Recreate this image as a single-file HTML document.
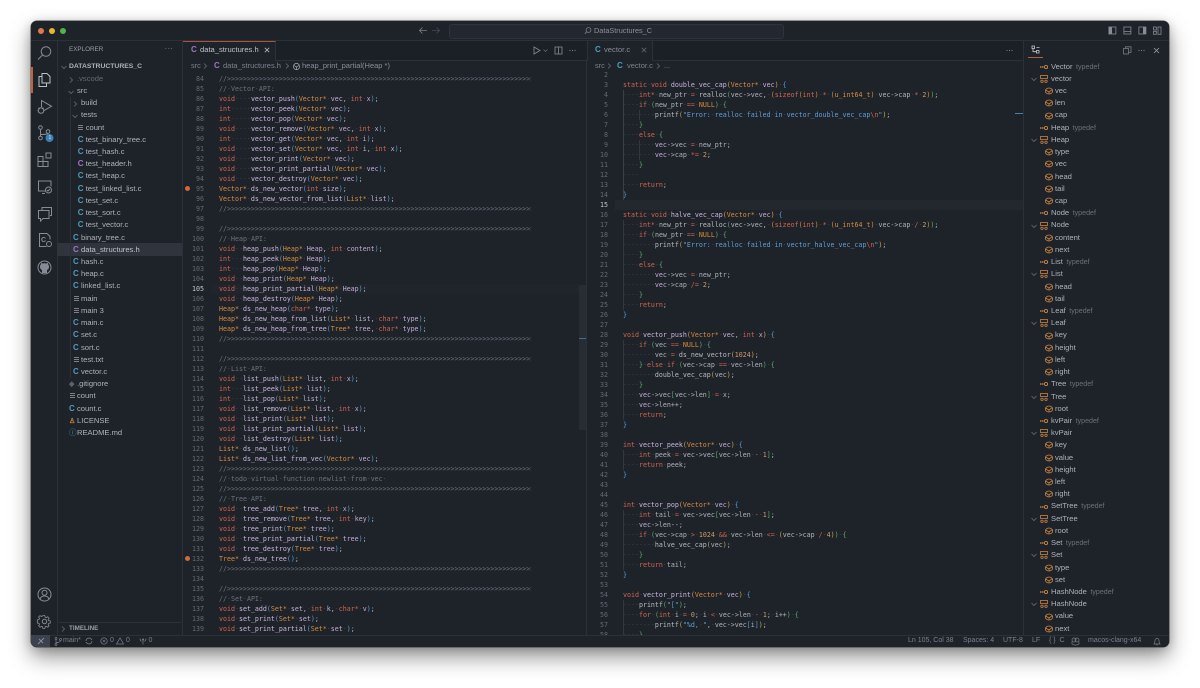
<!DOCTYPE html>
<html><head><meta charset="utf-8"><style>
html,body{margin:0;padding:0;background:#fff;width:1200px;height:688px;overflow:hidden}
body{position:relative;font-family:"Liberation Sans",sans-serif;color:#aeb2ba}
.a{position:absolute}
#win{left:31px;top:21px;width:1138px;height:626px;background:#1e2229;border-radius:6px;box-shadow:0 0 0 .5px #444,0 10px 22px rgba(0,0,0,.42),0 2px 10px rgba(0,0,0,.2)}
.l{background:#2c3038}
pre{position:absolute;margin:0;font:6.645px/10px "DejaVu Sans Mono",monospace;color:#b0b3bc;overflow:hidden}
pre i{font-style:normal;color:#3f4551}
.c{color:#6c727e}.c i{color:#4b515c}
.h{display:inline-block;width:312px;height:10px;overflow:hidden;vertical-align:top;color:#6c727e}
.k{color:#d0654f}.t{color:#d68d40}.f{color:#cbb6df}.v{color:#c4abd7}.b{color:#559ed6}.g{color:#5cab6c}.y{color:#cfa24a}.s{color:#5f9fd6}.n{color:#cf9b6a}.o{color:#d0654f}.p{color:#b8bbc3}
.ln{text-align:right;color:#636974}
.ln b{font-weight:400;color:#c3c6cc}
.t7{font-size:7.3px;line-height:10px;white-space:nowrap}
.r{height:12.22px;line-height:12.22px;font-size:7.6px;white-space:nowrap;position:relative}
.i0{padding-left:69px}.i1{padding-left:77px}.i2{padding-left:81px}.i3{padding-left:85.7px}
.r u{display:inline-block;text-decoration:none;width:8px;margin-left:-8px;font-weight:700;font-size:8px}
.cb{color:#519aba}.cp{color:#a074c4}
.fi{height:5px;width:5px!important;margin-left:-7.5px!important;margin-right:2.5px;background:repeating-linear-gradient(#7b808a 0 1px,transparent 1px 2px)}
.r svg{position:absolute;top:3px}
.o0,.o1,.o2{position:relative;height:12.22px;line-height:12.22px;font-size:7.6px;white-space:nowrap}
.o0,.o1{padding-left:1051px}.o2{padding-left:1055px}
.o0 em,.o1 em{font-style:normal;color:#6a707b;font-size:7.1px;margin-left:3.5px}
.o0 svg,.o1 svg,.o2 svg{position:absolute;top:2.1px;width:8px;height:8px}
.o0 svg,.o1 svg{left:1040px}.o2 svg{left:1044.5px}
.o1 .ch{left:1029.5px}
svg{overflow:visible}
.ic{fill:none;stroke:#868b95;stroke-width:1}
.st{font-size:7px;line-height:12px;color:#7a808b;white-space:nowrap}
</style></head><body>
<svg width="0" height="0" style="position:absolute"><defs>
<symbol id="ch" viewBox="0 0 8 8"><path d="M1.5 3 4 5.5 6.5 3" fill="none" stroke="#666c77" stroke-width=".8"/></symbol>
<symbol id="cr" viewBox="0 0 8 8"><path d="M3 1.5 5.5 4 3 6.5" fill="none" stroke="#666c77" stroke-width=".8"/></symbol>
<symbol id="td" viewBox="0 0 8 8"><rect x="0" y="3.3" width="1.5" height="1.4" fill="#c98442"/><rect x="2" y="3.3" width="1.5" height="1.4" fill="#c98442"/><circle cx="6" cy="4" r="1.6" fill="none" stroke="#c98442" stroke-width=".9"/></symbol>
<symbol id="sr" viewBox="0 0 8 8"><g fill="none" stroke="#c98442" stroke-width=".8"><rect x=".5" y=".5" width="7" height="3"/><circle cx="2" cy="6.3" r="1.2"/><circle cx="6" cy="6.3" r="1.2"/></g></symbol>
<symbol id="fd" viewBox="0 0 8 8"><g fill="none" stroke="#c98442" stroke-width=".8"><ellipse cx="4" cy="4" rx="3.7" ry="3"/><path d="M.6 3 4 5l3.2-2.3M4 5v2"/></g></symbol>
</defs></svg>
<div class="a" id="win"></div>

<!-- titlebar -->
<div class="a" style="left:37.5px;top:28px;width:6px;height:6px;border-radius:50%;background:#dd7a4b"></div>
<div class="a" style="left:48.5px;top:28px;width:6px;height:6px;border-radius:50%;background:#ecb42f"></div>
<div class="a" style="left:59.5px;top:28px;width:6px;height:6px;border-radius:50%;background:#52b24e"></div>
<div class="a l" style="left:31px;top:40px;width:1138px;height:1px"></div>
<svg class="a" style="left:418px;top:26px" width="24" height="9"><path d="M9 4.5H1.5M4.5 1.5l-3 3 3 3" fill="none" stroke="#7c818b" stroke-width=".8"/><path d="M14 4.5h7.5M18.500 1.500l3 3-3 3" fill="none" stroke="#454a54" stroke-width=".8"/></svg>
<div class="a" style="left:449px;top:24px;width:333px;height:12.5px;background:#23272f;border:.7px solid #2f333b;border-radius:3px"></div>
<svg class="a" style="left:584px;top:27px" width="8" height="8"><circle cx="4.5" cy="3" r="2.4" fill="none" stroke="#7c818b" stroke-width=".8"/><path d="M2.7 4.8.8 6.8" stroke="#7c818b" stroke-width=".8"/></svg>
<div class="a t7" style="left:594px;top:25.5px;color:#8c9099">DataStructures_C</div>
<svg class="a" style="left:1108px;top:26px" width="54" height="9"><g fill="none" stroke="#868b95" stroke-width=".8"><rect x=".9" y="1" width="7" height="7"/><rect x="15.9" y="1" width="7" height="7"/><path d="M15.9 5.5h7"/><rect x="30.9" y="1" width="7" height="7"/><rect x="45.5" y="1" width="2.8" height="3"/><rect x="45.5" y="5.5" width="2.8" height="2.8"/><rect x="50" y="1" width="3" height="7.3"/></g><rect x="1" y="1" width="3" height="7" fill="#868b95"/><rect x="35" y="1" width="3" height="7" fill="#868b95"/></svg>

<!-- activity bar -->
<div class="a l" style="left:57px;top:41px;width:1px;height:594px"></div>
<div class="a" style="left:31px;top:67px;width:1.5px;height:26px;background:#c0623f"></div>
<svg class="a" style="left:36px;top:45px" width="17" height="16"><circle cx="10" cy="6.5" r="4.8" class="ic"/><path d="M6.5 10 2 14.5" class="ic"/></svg>
<svg class="a" style="left:37px;top:72px" width="15" height="16"><path d="M5 1.5h5l3 3v6.5H5z" fill="none" stroke="#bcc0c7" stroke-width="1"/><path d="M5 4.5H2v10h7.5V11" fill="none" stroke="#bcc0c7" stroke-width="1"/></svg>
<svg class="a" style="left:37px;top:99px" width="16" height="16"><path d="M4.5 8V1.5l10 5.8-7 4" class="ic"/><circle cx="4" cy="11.5" r="2.8" class="ic"/><path d="M1.5 8.800 3 10M6.500 8.800 5 10M.5 11.500h1M6.500 11.500h1" class="ic"/></svg>
<svg class="a" style="left:37px;top:125px" width="16" height="17"><circle cx="3.5" cy="2.5" r="1.8" class="ic"/><circle cx="3.5" cy="13" r="1.8" class="ic"/><circle cx="11" cy="6.5" r="1.8" class="ic"/><path d="M3.5 4.500V11M4 9.500c4 0 7-.5 7-1.300" class="ic"/><circle cx="12.5" cy="13" r="4" fill="#3d7fb8"/></svg>
<div class="a" style="left:48.500px;top:135px;font-size:5px;color:#d9e6f2;line-height:6px">1</div>
<svg class="a" style="left:37px;top:152px" width="16" height="16"><path d="M1 4.500h5v5h5v5H1zM1 9.500h5v5M6 9.500v5" class="ic"/><rect x="9" y="1" width="5" height="5" class="ic"/></svg>
<svg class="a" style="left:37px;top:179px" width="16" height="16"><path d="M9 12H1.500V2H14v5.500M5 14.500h3" class="ic"/><circle cx="11.5" cy="11" r="3" class="ic"/><path d="M10 11l1 1 2-2" class="ic"/></svg>
<svg class="a" style="left:37px;top:206px" width="16" height="16"><path d="M5 4V1.500h9.500v8H13" class="ic"/><path d="M1.500 4.500H12v8H6l-2.500 2.500v-2.500h-2z" class="ic"/></svg>
<svg class="a" style="left:37px;top:232px" width="16" height="16"><path d="M10 1.500H2.500v13h7M10 1.500l3 3v3" class="ic"/><text x="4" y="10" font-size="7" font-weight="700" fill="#868b95" font-family="Liberation Sans">C</text><circle cx="12" cy="12" r="2.5" class="ic"/></svg>
<svg class="a" style="left:37px;top:259.5px" width="15" height="15"><circle cx="7.5" cy="7.5" r="6.5" class="ic"/><path d="M5 13v-3c-1.500-.8-2-1.600-2-3.500 0-1 .3-1.700 1-2.300l.1-1.500 1.600.8a6 6 0 0 1 3.600 0l1.600-.8.100 1.500c.7.600 1 1.300 1 2.300 0 1.900-.5 2.700-2 3.500v3z" fill="#868b95"/></svg>
<svg class="a" style="left:37px;top:587px" width="15" height="15"><circle cx="7.5" cy="7.5" r="6.5" class="ic"/><circle cx="7.5" cy="5.8" r="2.5" class="ic"/><path d="M3 12c.8-2.200 2.500-3 4.500-3s3.700.8 4.500 3" class="ic"/></svg>
<svg class="a" style="left:37px;top:613.5px" width="15" height="15"><circle cx="7.5" cy="7.5" r="2.2" class="ic"/><path d="M6.300 1h2.400l.4 2 1.400.6 1.700-1.100 1.700 1.700-1.100 1.700.6 1.400 2 .4v2.400l-2 .4-.6 1.400 1.100 1.700-1.700 1.700-1.700-1.100-1.400.6-.4 2H6.300l-.4-2-1.400-.6-1.700 1.100-1.700-1.700 1.100-1.700-.6-1.400-2-.4V6.300l2-.4.600-1.400-1.100-1.700 1.700-1.700 1.700 1.100 1.400-.6z" transform="translate(.7 .7) scale(.82)" class="ic"/></svg>

<!-- sidebar -->
<div class="a l" style="left:182px;top:41px;width:1px;height:594px"></div>
<div class="a" style="left:69px;top:45px;font-size:6.3px;line-height:10px;color:#9a9ea7">EXPLORER</div>
<div class="a" style="left:164.5px;top:43.5px;font-size:8px;line-height:10px;letter-spacing:.3px;color:#7c818b">···</div>
<div class="a" style="left:57px;top:243.3px;width:125px;height:12.3px;background:#30343c"></div>
<div class="a" style="left:69.5px;top:97px;width:.7px;height:281px;background:#2c3038"></div>
<svg class="a" style="left:60px;top:62.5px" width="8" height="8"><use href="#ch"/></svg>
<div class="a" style="left:69px;top:60.5px;font-size:6.8px;font-weight:700;line-height:12px;color:#aeb2ba;white-space:nowrap">DATASTRUCTURES_C</div>
<div class="a" style="left:0;top:72.7px;width:182px;overflow:hidden">
<div class="r i1" style="color:#646a74"><svg style="left:67px" width="8" height="8"><use href="#cr"/></svg>.vscode</div>
<div class="r i1"><svg style="left:67px" width="8" height="8"><use href="#ch"/></svg>src</div>
<div class="r i2"><svg style="left:71px" width="8" height="8"><use href="#cr"/></svg>build</div>
<div class="r i2"><svg style="left:71px" width="8" height="8"><use href="#ch"/></svg>tests</div>
<div class="r i3"><u class="fi"></u>count</div>
<div class="r i3"><u class="cb">C</u>test_binary_tree.c</div>
<div class="r i3"><u class="cb">C</u>test_hash.c</div>
<div class="r i3"><u class="cp">C</u>test_header.h</div>
<div class="r i3"><u class="cb">C</u>test_heap.c</div>
<div class="r i3"><u class="cb">C</u>test_linked_list.c</div>
<div class="r i3"><u class="cb">C</u>test_set.c</div>
<div class="r i3"><u class="cb">C</u>test_sort.c</div>
<div class="r i3"><u class="cb">C</u>test_vector.c</div>
<div class="r i2"><u class="cb">C</u>binary_tree.c</div>
<div class="r i2" style="color:#bfc2c9"><u class="cp">C</u>data_structures.h</div>
<div class="r i2"><u class="cb">C</u>hash.c</div>
<div class="r i2"><u class="cb">C</u>heap.c</div>
<div class="r i2"><u class="cb">C</u>linked_list.c</div>
<div class="r i2"><u class="fi"></u>main</div>
<div class="r i2"><u class="fi"></u>main 3</div>
<div class="r i2"><u class="cb">C</u>main.c</div>
<div class="r i2"><u class="cb">C</u>set.c</div>
<div class="r i2"><u class="cb">C</u>sort.c</div>
<div class="r i2"><u class="fi"></u>test.txt</div>
<div class="r i2"><u class="cb">C</u>vector.c</div>
<div class="r i1"><u style="color:#5c626c;font-size:7px">◆</u>.gitignore</div>
<div class="r i1"><u class="fi"></u>count</div>
<div class="r i1"><u class="cb">C</u>count.c</div>
<div class="r i1"><u style="color:#d0883f;font-size:7px">♙</u>LICENSE</div>
<div class="r i1"><u style="color:#519aba;font-size:7.5px;font-weight:400">ⓘ</u>README.md</div>
</div>
<div class="a l" style="left:58px;top:622px;width:124px;height:1px"></div>
<svg class="a" style="left:59px;top:625px" width="8" height="8"><use href="#cr"/></svg>
<div class="a" style="left:69px;top:624px;font-size:6.3px;font-weight:700;line-height:10px;color:#9a9ea7">TIMELINE</div>

<!-- tab strips -->
<div class="a" style="left:183px;top:41px;width:840px;height:19px;background:#1b1f26"></div>
<div class="a l" style="left:183px;top:59.5px;width:840px;height:.7px"></div>
<div class="a" style="left:182.5px;top:41px;width:93.5px;height:19.5px;background:#1e2229;border-top:1px solid #b0503f;box-sizing:border-box;border-right:.7px solid #2c3038"></div>
<div class="a" style="left:191px;top:45px;font-size:8px;font-weight:700;line-height:10px;color:#a074c4">C</div>
<div class="a t7" style="left:200px;top:45px;color:#bfc2c9;font-size:7.6px">data_structures.h</div>
<svg class="a" style="left:264px;top:47px" width="6" height="6"><path d="M.8.8l4.4 4.4M5.2.8.8 5.2" stroke="#b4b7bf" stroke-width=".8"/></svg>
<svg class="a" style="left:533px;top:46px" width="52" height="9"><path d="M1 1v7l6-3.500z" fill="none" stroke="#868b95" stroke-width=".8"/><path d="M10.5 3.500 12.5 5.500l2-2" fill="none" stroke="#666c77" stroke-width=".7"/><rect x="22" y="1" width="7" height="7" fill="none" stroke="#868b95" stroke-width=".8"/><path d="M25.5 1v7" stroke="#868b95" stroke-width=".8"/><g fill="#777c86"><circle cx="37" cy="4.5" r=".6"/><circle cx="39.5" cy="4.5" r=".6"/><circle cx="42" cy="4.5" r=".6"/></g></svg>
<div class="a" style="left:586.5px;top:41px;width:66px;height:19.5px;background:#1e2229;border-left:.7px solid #2c3038;border-right:.7px solid #2c3038;box-sizing:border-box"></div>
<div class="a" style="left:595px;top:45px;font-size:8px;font-weight:700;line-height:10px;color:#519aba">C</div>
<div class="a t7" style="left:604px;top:45px;color:#888c95;font-size:7.6px">vector.c</div>
<svg class="a" style="left:641px;top:47px" width="6" height="6"><path d="M.8.8l4.4 4.4M5.2.8.8 5.2" stroke="#5e646f" stroke-width=".8"/></svg>
<svg class="a" style="left:1005px;top:46px" width="10" height="9"><g fill="#777c86"><circle cx="2" cy="4.5" r=".6"/><circle cx="4.5" cy="4.5" r=".6"/><circle cx="7" cy="4.5" r=".6"/></g></svg>

<!-- breadcrumbs -->
<div class="a t7" style="left:191px;top:61px;color:#7d828c">src</div>
<svg class="a" style="left:201px;top:62px" width="8" height="8"><use href="#cr"/></svg>
<div class="a" style="left:214px;top:61px;font-size:8px;font-weight:700;line-height:10px;color:#a074c4">C</div>
<div class="a t7" style="left:223px;top:61px;color:#7d828c;font-size:7.5px">data_structures.h</div>
<svg class="a" style="left:283px;top:62px" width="8" height="8"><use href="#cr"/></svg>
<svg class="a" style="left:292.5px;top:62.5px" width="7" height="7"><g fill="none" stroke="#a8acb4" stroke-width=".7"><circle cx="3.5" cy="3.5" r="3.1"/><path d="M1 2.500 3.500 4l2.500-1.500M3.500 4v2.600"/></g></svg>
<div class="a t7" style="left:302px;top:61px;color:#8a8e97;font-size:7.5px">heap_print_partial(Heap *)</div>
<div class="a t7" style="left:595px;top:61px;color:#7d828c">src</div>
<svg class="a" style="left:605px;top:62px" width="8" height="8"><use href="#cr"/></svg>
<div class="a" style="left:617px;top:61px;font-size:8px;font-weight:700;line-height:10px;color:#519aba">C</div>
<div class="a t7" style="left:627px;top:61px;color:#7d828c;font-size:7.5px">vector.c</div>
<svg class="a" style="left:654px;top:62px" width="8" height="8"><use href="#cr"/></svg>
<div class="a t7" style="left:664px;top:61px;color:#7d828c">...</div>

<!-- left editor -->
<div class="a l" style="left:586px;top:60px;width:1px;height:575px"></div>
<div class="a" style="left:579px;top:285px;width:7px;height:145px;background:#282c33"></div>
<div class="a" style="left:579px;top:337.5px;width:7px;height:1px;background:#3f6f95"></div>
<div class="a" style="left:211px;top:283.5px;width:368px;height:10px;background:#20242b"></div>
<div class="a" style="left:185px;top:185.5px;width:5px;height:5px;border-radius:50%;background:#d2663f"></div>
<div class="a" style="left:185px;top:555.5px;width:5px;height:5px;border-radius:50%;background:#d2663f"></div>
<pre class="ln" style="left:186px;top:73.5px;width:18px;height:561px">84
85
86
87
88
89
90
91
92
93
94
95
96
97
98
99
100
101
102
103
104
<b>105</b>
106
107
108
109
110
111
112
113
114
115
116
117
118
119
120
121
122
123
124
125
126
127
128
129
130
131
132
133
134
135
136
137
138
139</pre>
<pre style="left:219px;top:73.5px;width:360px;height:561px"><span class="h">//>>>>>>>>>>>>>>>>>>>>>>>>>>>>>>>>>>>>>>>>>>>>>>>>>>>>>>>>>>>>>>>>>>>>>>>>>>>>>>></span>
<span class="c">//<i>·</i>Vector<i>·</i>API:</span>
<span class="k">void</span><i>····</i><span class="f">vector_push</span><span class="b">(</span><span class="t">Vector*</span><i>·</i><span class="v">vec</span>,<i>·</i><span class="k">int</span><i>·</i><span class="v">x</span><span class="b">)</span>;
<span class="k">int</span><i>·····</i><span class="f">vector_peek</span><span class="b">(</span><span class="t">Vector*</span><i>·</i><span class="v">vec</span><span class="b">)</span>;
<span class="k">int</span><i>·····</i><span class="f">vector_pop</span><span class="b">(</span><span class="t">Vector*</span><i>·</i><span class="v">vec</span><span class="b">)</span>;
<span class="k">void</span><i>····</i><span class="f">vector_remove</span><span class="b">(</span><span class="t">Vector*</span><i>·</i><span class="v">vec</span>,<i>·</i><span class="k">int</span><i>·</i><span class="v">x</span><span class="b">)</span>;
<span class="k">int</span><i>·····</i><span class="f">vector_get</span><span class="b">(</span><span class="t">Vector*</span><i>·</i><span class="v">vec</span>,<i>·</i><span class="k">int</span><i>·</i><span class="v">i</span><span class="b">)</span>;
<span class="k">void</span><i>····</i><span class="f">vector_set</span><span class="b">(</span><span class="t">Vector*</span><i>·</i><span class="v">vec</span>,<i>·</i><span class="k">int</span><i>·</i><span class="v">i</span>,<i>·</i><span class="k">int</span><i>·</i><span class="v">x</span><span class="b">)</span>;
<span class="k">void</span><i>····</i><span class="f">vector_print</span><span class="b">(</span><span class="t">Vector*</span><i>·</i><span class="v">vec</span><span class="b">)</span>;
<span class="k">void</span><i>····</i><span class="f">vector_print_partial</span><span class="b">(</span><span class="t">Vector*</span><i>·</i><span class="v">vec</span><span class="b">)</span>;
<span class="k">void</span><i>····</i><span class="f">vector_destroy</span><span class="b">(</span><span class="t">Vector*</span><i>·</i><span class="v">vec</span><span class="b">)</span>;
<span class="t">Vector*</span><i>·</i><span class="f">ds_new_vector</span><span class="b">(</span><span class="k">int</span><i>·</i><span class="v">size</span><span class="b">)</span>;
<span class="t">Vector*</span><i>·</i><span class="f">ds_new_vector_from_list</span><span class="b">(</span><span class="t">List*</span><i>·</i><span class="v">list</span><span class="b">)</span>;
<span class="h">//>>>>>>>>>>>>>>>>>>>>>>>>>>>>>>>>>>>>>>>>>>>>>>>>>>>>>>>>>>>>>>>>>>>>>>>>>>>>>>></span>

<span class="h">//>>>>>>>>>>>>>>>>>>>>>>>>>>>>>>>>>>>>>>>>>>>>>>>>>>>>>>>>>>>>>>>>>>>>>>>>>>>>>>></span>
<span class="c">//<i>·</i>Heap<i>·</i>API:</span>
<span class="k">void</span><i>··</i><span class="f">heap_push</span><span class="b">(</span><span class="t">Heap*</span><i>·</i><span class="v">Heap</span>,<i>·</i><span class="k">int</span><i>·</i><span class="v">content</span><span class="b">)</span>;
<span class="k">int</span><i>···</i><span class="f">heap_peek</span><span class="b">(</span><span class="t">Heap*</span><i>·</i><span class="v">Heap</span><span class="b">)</span>;
<span class="k">int</span><i>···</i><span class="f">heap_pop</span><span class="b">(</span><span class="t">Heap*</span><i>·</i><span class="v">Heap</span><span class="b">)</span>;
<span class="k">void</span><i>··</i><span class="f">heap_print</span><span class="b">(</span><span class="t">Heap*</span><i>·</i><span class="v">Heap</span><span class="b">)</span>;
<span class="k">void</span><i>··</i><span class="f">heap_print_partial</span><span class="b">(</span><span class="t">Heap*</span><i>·</i><span class="v">Heap</span><span class="b">)</span>;
<span class="k">void</span><i>··</i><span class="f">heap_destroy</span><span class="b">(</span><span class="t">Heap*</span><i>·</i><span class="v">Heap</span><span class="b">)</span>;
<span class="t">Heap*</span><i>·</i><span class="f">ds_new_heap</span><span class="b">(</span><span class="k">char*</span><i>·</i><span class="v">type</span><span class="b">)</span>;
<span class="t">Heap*</span><i>·</i><span class="f">ds_new_heap_from_list</span><span class="b">(</span><span class="t">List*</span><i>·</i><span class="v">list</span>,<i>·</i><span class="k">char*</span><i>·</i><span class="v">type</span><span class="b">)</span>;
<span class="t">Heap*</span><i>·</i><span class="f">ds_new_heap_from_tree</span><span class="b">(</span><span class="t">Tree*</span><i>·</i><span class="v">tree</span>,<i>·</i><span class="k">char*</span><i>·</i><span class="v">type</span><span class="b">)</span>;
<span class="h">//>>>>>>>>>>>>>>>>>>>>>>>>>>>>>>>>>>>>>>>>>>>>>>>>>>>>>>>>>>>>>>>>>>>>>>>>>>>>>>></span>

<span class="h">//>>>>>>>>>>>>>>>>>>>>>>>>>>>>>>>>>>>>>>>>>>>>>>>>>>>>>>>>>>>>>>>>>>>>>>>>>>>>>>></span>
<span class="c">//<i>·</i>List<i>·</i>API:</span>
<span class="k">void</span><i>··</i><span class="f">list_push</span><span class="b">(</span><span class="t">List*</span><i>·</i><span class="v">list</span>,<i>·</i><span class="k">int</span><i>·</i><span class="v">x</span><span class="b">)</span>;
<span class="k">int</span><i>···</i><span class="f">list_peek</span><span class="b">(</span><span class="t">List*</span><i>·</i><span class="v">list</span><span class="b">)</span>;
<span class="k">int</span><i>···</i><span class="f">list_pop</span><span class="b">(</span><span class="t">List*</span><i>·</i><span class="v">list</span><span class="b">)</span>;
<span class="k">void</span><i>··</i><span class="f">list_remove</span><span class="b">(</span><span class="t">List*</span><i>·</i><span class="v">list</span>,<i>·</i><span class="k">int</span><i>·</i><span class="v">x</span><span class="b">)</span>;
<span class="k">void</span><i>··</i><span class="f">list_print</span><span class="b">(</span><span class="t">List*</span><i>·</i><span class="v">list</span><span class="b">)</span>;
<span class="k">void</span><i>··</i><span class="f">list_print_partial</span><span class="b">(</span><span class="t">List*</span><i>·</i><span class="v">list</span><span class="b">)</span>;
<span class="k">void</span><i>··</i><span class="f">list_destroy</span><span class="b">(</span><span class="t">List*</span><i>·</i><span class="v">list</span><span class="b">)</span>;
<span class="t">List*</span><i>·</i><span class="f">ds_new_list</span><span class="b">()</span>;
<span class="t">List*</span><i>·</i><span class="f">ds_new_list_from_vec</span><span class="b">(</span><span class="t">Vector*</span><i>·</i><span class="v">vec</span><span class="b">)</span>;
<span class="h">//>>>>>>>>>>>>>>>>>>>>>>>>>>>>>>>>>>>>>>>>>>>>>>>>>>>>>>>>>>>>>>>>>>>>>>>>>>>>>>></span>
<span class="c">//<i>·</i>todo<i>·</i>virtual<i>·</i>function<i>·</i>newlist<i>·</i>from<i>·</i>vec<i>·</i></span>
<span class="h">//>>>>>>>>>>>>>>>>>>>>>>>>>>>>>>>>>>>>>>>>>>>>>>>>>>>>>>>>>>>>>>>>>>>>>>>>>>>>>>></span>
<span class="c">//<i>·</i>Tree<i>·</i>API:</span>
<span class="k">void</span><i>··</i><span class="f">tree_add</span><span class="b">(</span><span class="t">Tree*</span><i>·</i><span class="v">tree</span>,<i>·</i><span class="k">int</span><i>·</i><span class="v">x</span><span class="b">)</span>;
<span class="k">void</span><i>··</i><span class="f">tree_remove</span><span class="b">(</span><span class="t">Tree*</span><i>·</i><span class="v">tree</span>,<i>·</i><span class="k">int</span><i>·</i><span class="v">key</span><span class="b">)</span>;
<span class="k">void</span><i>··</i><span class="f">tree_print</span><span class="b">(</span><span class="t">Tree*</span><i>·</i><span class="v">tree</span><span class="b">)</span>;
<span class="k">void</span><i>··</i><span class="f">tree_print_partial</span><span class="b">(</span><span class="t">Tree*</span><i>·</i><span class="v">tree</span><span class="b">)</span>;
<span class="k">void</span><i>··</i><span class="f">tree_destroy</span><span class="b">(</span><span class="t">Tree*</span><i>·</i><span class="v">tree</span><span class="b">)</span>;
<span class="t">Tree*</span><i>·</i><span class="f">ds_new_tree</span><span class="b">()</span>;
<span class="h">//>>>>>>>>>>>>>>>>>>>>>>>>>>>>>>>>>>>>>>>>>>>>>>>>>>>>>>>>>>>>>>>>>>>>>>>>>>>>>>></span>

<span class="h">//>>>>>>>>>>>>>>>>>>>>>>>>>>>>>>>>>>>>>>>>>>>>>>>>>>>>>>>>>>>>>>>>>>>>>>>>>>>>>>></span>
<span class="c">//<i>·</i>Set<i>·</i>API:</span>
<span class="k">void</span><i>·</i><span class="f">set_add</span><span class="b">(</span><span class="t">Set*</span><i>·</i><span class="v">set</span>,<i>·</i><span class="k">int</span><i>·</i><span class="v">k</span>,<i>·</i><span class="k">char*</span><i>·</i><span class="v">v</span><span class="b">)</span>;
<span class="k">void</span><i>·</i><span class="f">set_print</span><span class="b">(</span><span class="t">Set*</span><i>·</i><span class="v">set</span><span class="b">)</span>;
<span class="k">void</span><i>·</i><span class="f">set_print_partial</span><span class="b">(</span><span class="t">Set*</span><i>·</i><span class="v">set</span><i>·</i><span class="b">)</span>;</pre>

<!-- right editor -->
<div class="a" style="left:615px;top:200px;width:408px;height:10px;background:#23272e"></div>
<div class="a" style="left:1015px;top:113px;width:8px;height:1px;background:#4d7ea6"></div>
<div class="a" style="left:622.5px;top:90px;width:.7px;height:110px;background:#3a3f49"></div>
<div class="a" style="left:622.5px;top:220px;width:.7px;height:90px;background:#33373f"></div>
<div class="a" style="left:622.5px;top:340px;width:.7px;height:80px;background:#33373f"></div>
<div class="a" style="left:622.5px;top:450px;width:.7px;height:20px;background:#33373f"></div>
<div class="a" style="left:622.5px;top:510px;width:.7px;height:60px;background:#33373f"></div>
<div class="a" style="left:622.5px;top:600px;width:.7px;height:35px;background:#33373f"></div>
<div class="a" style="left:638.5px;top:110px;width:.7px;height:10px;background:#33373f"></div>
<div class="a" style="left:638.5px;top:140px;width:.7px;height:20px;background:#33373f"></div>
<pre class="ln" style="left:590px;top:70px;width:18px;height:565px">2
3
4
5
6
7
8
9
10
11
12
13
14
<b>15</b>
16
17
18
19
20
21
22
23
24
25
26
27
28
29
30
31
32
33
34
35
36
37
38
39
40
41
42
43
44
45
46
47
48
49
50
51
52
53
54
55
56
57
58</pre>
<pre style="left:623px;top:80px;width:392px;height:555px"><span class="k">static</span><i>·</i><span class="k">void</span><i>·</i><span class="f">double_vec_cap</span><span class="y">(</span><span class="t">Vector*</span><i>·</i><span class="v">vec</span><span class="y">)</span><i>·</i><span class="b">{</span>
<i>····</i><span class="k">int*</span><i>·</i>new_ptr<i>·</i><span class="o">=</span><i>·</i><span class="p">realloc</span><span class="g">(</span>vec-&gt;vec,<i>·</i><span class="t">(</span><span class="k">sizeof</span><span class="t">(</span><span class="k">int</span><span class="t">)</span><i>·</i><span class="o">*</span><i>·</i><span class="t">(u_int64_t)</span><i>·</i>vec-&gt;cap<i>·</i><span class="o">*</span><i>·</i><span class="n">2</span><span class="t">)</span><span class="g">)</span>;
<i>····</i><span class="k">if</span><i>·</i><span class="g">(</span>new_ptr<i>·</i><span class="o">==</span><i>·</i><span class="t">NULL</span><span class="g">)</span><i>·</i><span class="g">{</span>
<i>········</i><span class="p">printf</span><span class="y">(</span><span class="s">"Error:<i>·</i>realloc<i>·</i>failed<i>·</i>in<i>·</i>vector_double_vec_cap</span><span class="k">\n</span><span class="s">"</span><span class="y">)</span>;
<i>····</i><span class="g">}</span>
<i>····</i><span class="k">else</span><i>·</i><span class="g">{</span>
<i>········</i><span class="v">vec</span>-&gt;vec<i>·</i><span class="o">=</span><i>·</i>new_ptr;
<i>········</i><span class="v">vec</span>-&gt;cap<i>·</i><span class="o">*=</span><i>·</i><span class="n">2</span>;
<i>····</i><span class="g">}</span>
<i>····</i>
<i>····</i><span class="k">return</span>;
<span class="b">}</span>

<span class="k">static</span><i>·</i><span class="k">void</span><i>·</i><span class="f">halve_vec_cap</span><span class="y">(</span><span class="t">Vector*</span><i>·</i><span class="v">vec</span><span class="y">)</span><i>·</i><span class="b">{</span>
<i>····</i><span class="k">int*</span><i>·</i>new_ptr<i>·</i><span class="o">=</span><i>·</i><span class="p">realloc</span><span class="g">(</span>vec-&gt;vec,<i>·</i><span class="t">(</span><span class="k">sizeof</span><span class="t">(</span><span class="k">int</span><span class="t">)</span><i>·</i><span class="o">*</span><i>·</i><span class="t">(u_int64_t)</span><i>·</i>vec-&gt;cap<i>·</i><span class="o">/</span><i>·</i><span class="n">2</span><span class="t">)</span><span class="g">)</span>;
<i>····</i><span class="k">if</span><i>·</i><span class="g">(</span>new_ptr<i>·</i><span class="o">==</span><i>·</i><span class="t">NULL</span><span class="g">)</span><i>·</i><span class="g">{</span>
<i>········</i><span class="p">printf</span><span class="y">(</span><span class="s">"Error:<i>·</i>realloc<i>·</i>failed<i>·</i>in<i>·</i>vector_halve_vec_cap</span><span class="k">\n</span><span class="s">"</span><span class="y">)</span>;
<i>····</i><span class="g">}</span>
<i>····</i><span class="k">else</span><i>·</i><span class="g">{</span>
<i>········</i><span class="v">vec</span>-&gt;vec<i>·</i><span class="o">=</span><i>·</i>new_ptr;
<i>········</i><span class="v">vec</span>-&gt;cap<i>·</i><span class="o">/=</span><i>·</i><span class="n">2</span>;
<i>····</i><span class="g">}</span>
<i>····</i><span class="k">return</span>;
<span class="b">}</span>

<span class="k">void</span><i>·</i><span class="f">vector_push</span><span class="y">(</span><span class="t">Vector*</span><i>·</i><span class="v">vec</span>,<i>·</i><span class="k">int</span><i>·</i><span class="v">x</span><span class="y">)</span><i>·</i><span class="b">{</span>
<i>····</i><span class="k">if</span><i>·</i><span class="g">(</span>vec<i>·</i><span class="o">==</span><i>·</i><span class="t">NULL</span><span class="g">)</span><i>·</i><span class="g">{</span>
<i>········</i>vec<i>·</i><span class="o">=</span><i>·</i><span class="p">ds_new_vector</span><span class="y">(</span><span class="n">1024</span><span class="y">)</span>;
<i>····</i><span class="g">}</span><i>·</i><span class="k">else</span><i>·</i><span class="k">if</span><i>·</i><span class="g">(</span>vec-&gt;cap<i>·</i><span class="o">==</span><i>·</i>vec-&gt;len<span class="g">)</span><i>·</i><span class="g">{</span>
<i>········</i><span class="p">double_vec_cap</span><span class="y">(</span>vec<span class="y">)</span>;
<i>····</i><span class="g">}</span>
<i>····</i><span class="v">vec</span>-&gt;vec<span class="g">[</span>vec-&gt;len<span class="g">]</span><i>·</i><span class="o">=</span><i>·</i>x;
<i>····</i><span class="v">vec</span>-&gt;len++;
<i>····</i><span class="k">return</span>;
<span class="b">}</span>

<span class="k">int</span><i>·</i><span class="f">vector_peek</span><span class="y">(</span><span class="t">Vector*</span><i>·</i><span class="v">vec</span><span class="y">)</span><i>·</i><span class="b">{</span>
<i>····</i><span class="k">int</span><i>·</i>peek<i>·</i><span class="o">=</span><i>·</i>vec-&gt;vec<span class="g">[</span>vec-&gt;len<i>·</i><span class="o">-</span><i>·</i><span class="n">1</span><span class="g">]</span>;
<i>····</i><span class="k">return</span><i>·</i>peek;
<span class="b">}</span>


<span class="k">int</span><i>·</i><span class="f">vector_pop</span><span class="y">(</span><span class="t">Vector*</span><i>·</i><span class="v">vec</span><span class="y">)</span><i>·</i><span class="b">{</span>
<i>····</i><span class="k">int</span><i>·</i>tail<i>·</i><span class="o">=</span><i>·</i>vec-&gt;vec<span class="g">[</span>vec-&gt;len<i>·</i><span class="o">-</span><i>·</i><span class="n">1</span><span class="g">]</span>;
<i>····</i><span class="v">vec</span>-&gt;len--;
<i>····</i><span class="k">if</span><i>·</i><span class="g">(</span>vec-&gt;cap<i>·</i><span class="o">&gt;</span><i>·</i><span class="n">1024</span><i>·</i><span class="o">&amp;&amp;</span><i>·</i>vec-&gt;len<i>·</i><span class="o">&lt;=</span><i>·</i><span class="y">(</span>vec-&gt;cap<i>·</i><span class="o">/</span><i>·</i><span class="n">4</span><span class="y">)</span><span class="g">)</span><i>·</i><span class="g">{</span>
<i>········</i><span class="p">halve_vec_cap</span><span class="y">(</span>vec<span class="y">)</span>;
<i>····</i><span class="g">}</span>
<i>····</i><span class="k">return</span><i>·</i>tail;
<span class="b">}</span>

<span class="k">void</span><i>·</i><span class="f">vector_print</span><span class="y">(</span><span class="t">Vector*</span><i>·</i><span class="v">vec</span><span class="y">)</span><i>·</i><span class="b">{</span>
<i>····</i><span class="p">printf</span><span class="g">(</span><span class="s">"["</span><span class="g">)</span>;
<i>····</i><span class="k">for</span><i>·</i><span class="g">(</span><span class="k">int</span><i>·</i>i<i>·</i><span class="o">=</span><i>·</i><span class="n">0</span>;<i>·</i>i<i>·</i><span class="o">&lt;</span><i>·</i>vec-&gt;len<i>·</i><span class="o">-</span><i>·</i><span class="n">1</span>;<i>·</i>i++<span class="g">)</span><i>·</i><span class="g">{</span>
<i>········</i><span class="p">printf</span><span class="y">(</span><span class="s">"%d,<i>·</i>"</span>,<i>·</i>vec-&gt;vec<span class="b">[</span>i<span class="b">]</span><span class="y">)</span>;
<i>····</i><span class="g">}</span></pre>

<!-- outline -->
<div class="a l" style="left:1023px;top:41px;width:1px;height:594px"></div>
<div class="a" style="left:1024px;top:41px;width:145px;height:19px;background:#1e2229"></div>
<svg class="a" style="left:1031px;top:45px" width="11" height="10"><path d="M1 1h2.5v2.500H1zM5.500 5.500h2.500V8H5.500zM2 3.500v3.200h3.500M5.500 2.500H8.500" fill="none" stroke="#c9ccd2" stroke-width=".8"/></svg>
<div class="a" style="left:1028px;top:57px;width:15px;height:1px;background:#b0623f"></div>
<svg class="a" style="left:1123px;top:46px" width="38" height="9"><g fill="none" stroke="#777c86" stroke-width=".8"><rect x=".5" y="2.5" width="5" height="5.5"/><path d="M2.500 2.500V.8h5.500v5.500H5.500"/></g><g fill="#777c86"><circle cx="16" cy="4.5" r=".6"/><circle cx="18.5" cy="4.5" r=".6"/><circle cx="21" cy="4.5" r=".6"/></g><path d="M31 2l5 5M36 2l-5 5" stroke="#9a9ea7" stroke-width=".8"/></svg>
<div class="a" style="left:0;top:60.6px;width:1169px;overflow:hidden">
<div class="o0"><svg><use href="#td"/></svg>Vector<em>typedef</em></div>
<div class="o1"><svg class="ch"><use href="#ch"/></svg><svg><use href="#sr"/></svg>vector</div>
<div class="o2"><svg><use href="#fd"/></svg>vec</div>
<div class="o2"><svg><use href="#fd"/></svg>len</div>
<div class="o2"><svg><use href="#fd"/></svg>cap</div>
<div class="o0"><svg><use href="#td"/></svg>Heap<em>typedef</em></div>
<div class="o1"><svg class="ch"><use href="#ch"/></svg><svg><use href="#sr"/></svg>Heap</div>
<div class="o2"><svg><use href="#fd"/></svg>type</div>
<div class="o2"><svg><use href="#fd"/></svg>vec</div>
<div class="o2"><svg><use href="#fd"/></svg>head</div>
<div class="o2"><svg><use href="#fd"/></svg>tail</div>
<div class="o2"><svg><use href="#fd"/></svg>cap</div>
<div class="o0"><svg><use href="#td"/></svg>Node<em>typedef</em></div>
<div class="o1"><svg class="ch"><use href="#ch"/></svg><svg><use href="#sr"/></svg>Node</div>
<div class="o2"><svg><use href="#fd"/></svg>content</div>
<div class="o2"><svg><use href="#fd"/></svg>next</div>
<div class="o0"><svg><use href="#td"/></svg>List<em>typedef</em></div>
<div class="o1"><svg class="ch"><use href="#ch"/></svg><svg><use href="#sr"/></svg>List</div>
<div class="o2"><svg><use href="#fd"/></svg>head</div>
<div class="o2"><svg><use href="#fd"/></svg>tail</div>
<div class="o0"><svg><use href="#td"/></svg>Leaf<em>typedef</em></div>
<div class="o1"><svg class="ch"><use href="#ch"/></svg><svg><use href="#sr"/></svg>Leaf</div>
<div class="o2"><svg><use href="#fd"/></svg>key</div>
<div class="o2"><svg><use href="#fd"/></svg>height</div>
<div class="o2"><svg><use href="#fd"/></svg>left</div>
<div class="o2"><svg><use href="#fd"/></svg>right</div>
<div class="o0"><svg><use href="#td"/></svg>Tree<em>typedef</em></div>
<div class="o1"><svg class="ch"><use href="#ch"/></svg><svg><use href="#sr"/></svg>Tree</div>
<div class="o2"><svg><use href="#fd"/></svg>root</div>
<div class="o0"><svg><use href="#td"/></svg>kvPair<em>typedef</em></div>
<div class="o1"><svg class="ch"><use href="#ch"/></svg><svg><use href="#sr"/></svg>kvPair</div>
<div class="o2"><svg><use href="#fd"/></svg>key</div>
<div class="o2"><svg><use href="#fd"/></svg>value</div>
<div class="o2"><svg><use href="#fd"/></svg>height</div>
<div class="o2"><svg><use href="#fd"/></svg>left</div>
<div class="o2"><svg><use href="#fd"/></svg>right</div>
<div class="o0"><svg><use href="#td"/></svg>SetTree<em>typedef</em></div>
<div class="o1"><svg class="ch"><use href="#ch"/></svg><svg><use href="#sr"/></svg>SetTree</div>
<div class="o2"><svg><use href="#fd"/></svg>root</div>
<div class="o0"><svg><use href="#td"/></svg>Set<em>typedef</em></div>
<div class="o1"><svg class="ch"><use href="#ch"/></svg><svg><use href="#sr"/></svg>Set</div>
<div class="o2"><svg><use href="#fd"/></svg>type</div>
<div class="o2"><svg><use href="#fd"/></svg>set</div>
<div class="o0"><svg><use href="#td"/></svg>HashNode<em>typedef</em></div>
<div class="o1"><svg class="ch"><use href="#ch"/></svg><svg><use href="#sr"/></svg>HashNode</div>
<div class="o2"><svg><use href="#fd"/></svg>value</div>
<div class="o2"><svg><use href="#fd"/></svg>next</div>
</div>

<!-- status bar -->
<div class="a" style="left:31px;top:635px;width:1138px;height:12px;background:#1e2229;border-radius:0 0 6px 6px"></div>
<div class="a l" style="left:31px;top:634.5px;width:1138px;height:.7px"></div>
<div class="a" style="left:31px;top:635px;width:19px;height:12px;background:#3c424d;border-radius:0 0 0 6px"></div>
<svg class="a" style="left:37px;top:637px" width="8" height="8"><path d="M1 7 7 1M2 2l4 4" stroke="#8a8f99" stroke-width=".9"/></svg>
<svg class="a" style="left:53.5px;top:636.5px" width="8" height="9"><g fill="none" stroke="#7a808b" stroke-width=".7"><circle cx="2" cy="1.5" r="1"/><circle cx="2" cy="7.5" r="1"/><circle cx="6.5" cy="2.5" r="1"/><path d="M2 2.500v4M2 5.500c2.500 0 4.500-.5 4.500-2"/></g></svg>
<div class="a st" style="left:63px;top:635px">main*</div>
<svg class="a" style="left:84.5px;top:637px" width="8" height="8"><path d="M1 4a3 3 0 0 1 5.200-2L7 3M7 4a3 3 0 0 1-5.200 2L1 5" fill="none" stroke="#7a808b" stroke-width=".7"/></svg>
<svg class="a" style="left:100px;top:637px" width="8" height="8"><circle cx="4" cy="4" r="3.2" fill="none" stroke="#7a808b" stroke-width=".7"/><path d="M2.800 2.800l2.400 2.400M5.200 2.800 2.800 5.200" stroke="#7a808b" stroke-width=".6"/></svg>
<div class="a st" style="left:110px;top:635px">0</div>
<svg class="a" style="left:116px;top:637px" width="8" height="8"><path d="M4 .8 7.500 7H.5z" fill="none" stroke="#7a808b" stroke-width=".7"/></svg>
<div class="a st" style="left:126px;top:635px">0</div>
<svg class="a" style="left:139px;top:637px" width="8" height="8"><path d="M4 3v4.500M1 1.500a4 4 0 0 0 1.500 3M7 1.500a4 4 0 0 1-1.500 3" fill="none" stroke="#7a808b" stroke-width=".7"/><circle cx="4" cy="2.5" r="1" fill="#7a808b"/></svg>
<div class="a st" style="left:148.5px;top:635px">0</div>
<div class="a st" style="left:908px;top:635px">Ln 105, Col 38</div>
<div class="a st" style="left:963px;top:635px">Spaces: 4</div>
<div class="a st" style="left:1003px;top:635px">UTF-8</div>
<div class="a st" style="left:1032px;top:635px">LF</div>
<div class="a st" style="left:1049px;top:635px">{ }&nbsp;&nbsp;C</div>
<svg class="a" style="left:1071px;top:636.5px" width="9" height="9"><g fill="none" stroke="#7a808b" stroke-width=".7"><ellipse cx="3" cy="3" rx="2" ry="2"/><ellipse cx="6" cy="3" rx="2" ry="2"/><path d="M1 4.500v2.500c2 1.500 5 1.500 7 0V4.500"/></g></svg>
<div class="a st" style="left:1088px;top:635px">macos-clang-x64</div>
<svg class="a" style="left:1153px;top:636.5px" width="8" height="9"><path d="M1 7c1-1 1-2 1-3.500a2 2 0 0 1 4 0C6 5 6 6 7 7zM3.300 8h1.400" fill="none" stroke="#7a808b" stroke-width=".7"/></svg>
</body></html>
